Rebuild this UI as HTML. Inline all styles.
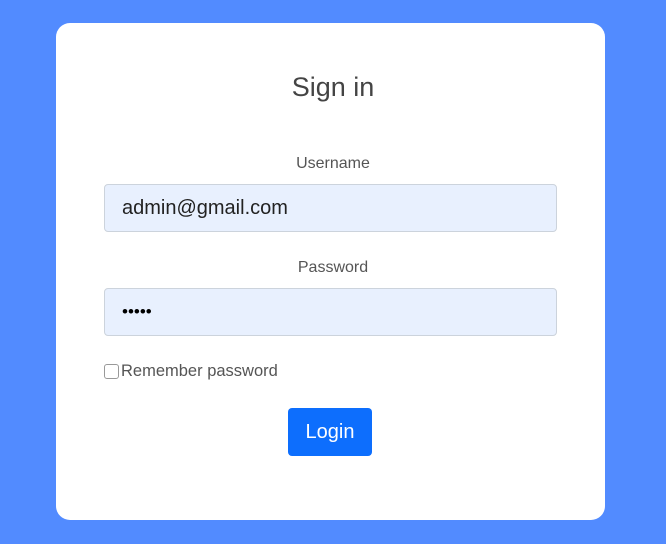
<!DOCTYPE html>
<html><head><style>
body{margin:0;width:666px;height:544px;background:#528bff;font-family:"Liberation Sans",sans-serif;position:relative;overflow:hidden}
.card{position:absolute;left:56px;top:23px;width:549px;height:497px;background:#fff;border-radius:14px}
h1{position:absolute;left:0;right:0;top:70px;margin:0;text-align:center;font-weight:normal;font-size:27px;color:#444;line-height:34px}
.lbl{position:absolute;left:0;right:0;text-align:center;font-size:16px;color:#555}
.inp{position:absolute;left:104px;width:453px;height:48px;background:#e8f0fe;border:1px solid #ccd3dc;border-radius:4px;box-sizing:border-box;font-size:20px;color:#222;line-height:46px;padding-left:17px}
.cb{position:absolute;left:104px;top:364px;width:15px;height:15px;border:1px solid #999;border-radius:3px;box-sizing:border-box;background:#fff}
.rem{position:absolute;left:121px;top:362px;font-size:16.5px;color:#555}
.btn{position:absolute;left:288px;top:408px;width:84px;height:48px;background:#0d6efd;border-radius:4px;color:#fff;font-size:20px;text-align:center;line-height:48px}
</style></head><body>
<div class="card"></div>
<h1>Sign in</h1>
<div class="lbl" style="top:155px">Username</div>
<div class="inp" style="top:184px">admin@gmail.com</div>
<div class="lbl" style="top:259px">Password</div>
<div class="inp" style="top:288px;font-size:17px;letter-spacing:0px;color:#000">•••••</div>
<div class="cb"></div>
<div class="rem">Remember password</div>
<div class="btn">Login</div>
</body></html>
